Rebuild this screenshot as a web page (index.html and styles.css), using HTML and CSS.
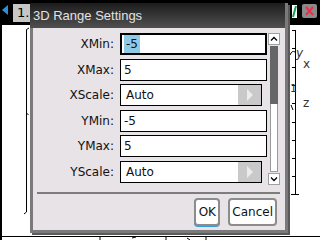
FILE: index.html
```html
<!DOCTYPE html>
<html lang="en">
<head>
    <meta charset="UTF-8">
    <title>3D Range Settings</title>
    <link rel="stylesheet" href="styles.css">
</head>
<body>
    <div class="screen">
        <div class="topbar">
            <svg class="nav-left" width="7" height="10" viewBox="0 0 7 10"><polygon points="6,0 0,5 6,10" fill="#2f8fd6"/></svg>
            <span class="tab">1.</span>
            <span class="spacer"></span>
            <svg class="doc-icon" width="8" height="15" viewBox="0 0 8 15">
                <rect x="0.5" y="0.5" width="6" height="14" fill="#fff" stroke="#000"/>
                <path d="M5 2 L2 13" stroke="#18a048" stroke-width="2"/>
            </svg>
            <span class="close-btn">
                <svg width="15" height="14" viewBox="0 0 15 14"><path d="M4 3 L11 11 M11 3 L4 11" stroke="#e8304a" stroke-width="2"/></svg>
            </span>
        </div>

        <div class="canvas">
            <svg class="graph" width="318" height="215" viewBox="0 0 318 215">
                <g transform="translate(-2,-25)" stroke="#000" stroke-width="1" fill="none">
                    <!-- left box edge -->
                    <path d="M29 28 L26.5 29.5 L26.5 212 L24 214"/>
                    <path d="M26.5 113 L28.5 115"/>
                    <!-- z axis -->
                    <path d="M295.5 30 L295.5 194"/>
                    <path d="M292 30.5 H295 M292 48.5 H295 M292 67.5 H295 M292 85.5 H295 M292 103.5 H295 M292 122.5 H295 M292 140.5 H295 M292 158.5 H295 M292 176.5 H295 M291 194.5 H299"/>
                    <path d="M290 55 Q292 50 295 52 M291 105 L293 110"/>
                    <!-- bottom edge -->
                    <path d="M2 236.5 H320"/>
                    <path d="M100 237 V240 M132 238 L136 237 M166 237 V240 M187 238 L190 240 M206 237 V240"/>
                </g>
                <g font-family="DejaVu Sans, sans-serif" font-size="12" fill="#333" transform="translate(-2,-25)">
                    <text x="296" y="57" font-style="italic">y</text>
                    <text x="303" y="68">x</text>
                    <text x="290" y="92" font-size="11">1</text>
                    <text x="303" y="107">z</text>
                </g>
            </svg>
        </div>

        <div class="dialog">
            <div class="dialog-title">3D Range Settings</div>
            <div class="dialog-body">
                <div class="form-area">
                    <div class="fields">
                        <label class="field-label">XMin:</label>
                        <div class="field-input focused"><span class="selected">-5</span></div>

                        <label class="field-label">XMax:</label>
                        <div class="field-input">5</div>

                        <label class="field-label">XScale:</label>
                        <div class="field-input select">Auto<span class="select-arrow"><svg width="8" height="14" viewBox="0 0 8 14"><polygon points="1,1 7,7 1,13" fill="#ececec"/></svg></span></div>

                        <label class="field-label">YMin:</label>
                        <div class="field-input">-5</div>

                        <label class="field-label">YMax:</label>
                        <div class="field-input">5</div>

                        <label class="field-label">YScale:</label>
                        <div class="field-input select">Auto<span class="select-arrow"><svg width="8" height="14" viewBox="0 0 8 14"><polygon points="1,1 7,7 1,13" fill="#ececec"/></svg></span></div>
                    </div>

                    <div class="scrollbar">
                        <span class="scroll-btn"><svg width="10" height="10" viewBox="0 0 10 10"><polyline points="2,6.5 5,3.5 8,6.5" fill="none" stroke="#000" stroke-width="1.3"/></svg></span>
                        <span class="scroll-track"><span class="scroll-thumb"></span></span>
                        <span class="scroll-btn"><svg width="10" height="10" viewBox="0 0 10 10"><polyline points="2,3.5 5,6.5 8,3.5" fill="none" stroke="#000" stroke-width="1.3"/></svg></span>
                    </div>
                </div>

                <div class="separator"></div>

                <div class="buttons">
                    <button class="btn btn-ok">OK</button>
                    <button class="btn">Cancel</button>
                </div>
            </div>
        </div>
    </div>
</body>
</html>
```

FILE: styles.css
```css
/* General */
* {
    box-sizing: border-box;
}

body {
    margin: 0;
    background-color: #000;
    font-family: "DejaVu Sans", sans-serif;
    font-size: 12px;
    color: #111;
}

.screen {
    position: relative;
    width: 320px;
    height: 240px;
    overflow: hidden;
    background-color: #000;
}

/* Top bar */
.topbar {
    height: 22px;
    display: flex;
    align-items: flex-start;
    padding-top: 4px;
}

.nav-left {
    margin: 1px 0 0 2px;
}

.tab {
    margin-left: 4px;
    width: 19px;
    height: 18px;
    padding-left: 4px;
    background-color: #c6c6c6;
    color: #000;
    font-size: 13px;
    line-height: 18px;
}

.spacer {
    flex: 1;
}

.doc-icon {
    margin-right: 3px;
}

.close-btn {
    width: 15px;
    height: 14px;
    margin-right: 3px;
    background-color: #8a8a8a;
    border-radius: 2px;
}

.close-btn svg {
    display: block;
}

/* Graph canvas */
.canvas {
    position: relative;
    height: 218px;
    background-color: #fff;
    border-top: 3px solid #000;
    border-left: 2px solid #000;
}

.graph {
    position: absolute;
    left: 0;
    top: 0;
}

/* Dialog */
.dialog {
    position: absolute;
    left: 30px;
    top: 3px;
    width: 258px;
    background-color: #e7e3e7;
    border: 3px solid #7a7a7a;
    border-top: none;
    box-shadow: 2px 2px 0 #5a5a5a;
}

.dialog-title {
    height: 25px;
    margin-left: -3px;
    padding-left: 3px;
    background: linear-gradient(#1c1c1c, #505050);
    color: #e2e2e2;
    font-family: "Liberation Sans", sans-serif;
    font-size: 13px;
    line-height: 25px;
}

.dialog-body {
    padding: 5px 5px 4px 0;
}

.form-area {
    display: flex;
    height: 152px;
}

.fields {
    display: grid;
    grid-template-columns: 81px 147px;
    column-gap: 6px;
    row-gap: 3.6px;
    align-content: start;
}

.field-label {
    text-align: right;
    align-self: center;
}

.field-input {
    height: 22px;
    padding-left: 3px;
    border: 1px solid #000;
    background-color: #fff;
    line-height: 20px;
}

.field-input.focused {
    border-width: 2px;
    padding-left: 2px;
    line-height: 18px;
}

.selected {
    display: inline-block;
    padding: 0 2px;
    background-color: #8ecae8;
}

.select {
    width: 142px;
    display: flex;
    padding-left: 5px;
}

.select-arrow {
    margin-left: auto;
    width: 23px;
    display: flex;
    align-items: center;
    justify-content: center;
    background-color: #c9c9c9;
}

/* Scrollbar */
.scrollbar {
    width: 12px;
    margin-left: 1px;
    display: flex;
    flex-direction: column;
    align-items: center;
}

.scroll-btn {
    width: 12px;
    height: 12px;
    display: flex;
    align-items: center;
    justify-content: center;
    background-color: #fff;
    border: 1px solid #a0a0a0;
}

.scroll-track {
    flex: 1;
    width: 8px;
    margin: 1px 0;
    background-color: #fff;
    border: 1px solid #9a9a9a;
}

.scroll-thumb {
    display: block;
    height: 58px;
    margin: -1px;
    background-color: #666;
}

/* Footer */
.separator {
    height: 2px;
    margin: 7px 0 0 4px;
    background-color: #7d7d7d;
}

.buttons {
    display: flex;
    justify-content: flex-end;
    gap: 8px;
    margin-top: 4px;
    padding-right: 3px;
}

.btn {
    height: 28px;
    padding: 0 2px;
    background-color: #fff;
    border: 2px solid #8c8c8c;
    border-radius: 4px;
    font-family: "DejaVu Sans", sans-serif;
    font-size: 12px;
    color: #111;
}

.btn-ok {
    width: 26px;
    box-shadow: 0 1px 0 #3a9ad9;
}
```
